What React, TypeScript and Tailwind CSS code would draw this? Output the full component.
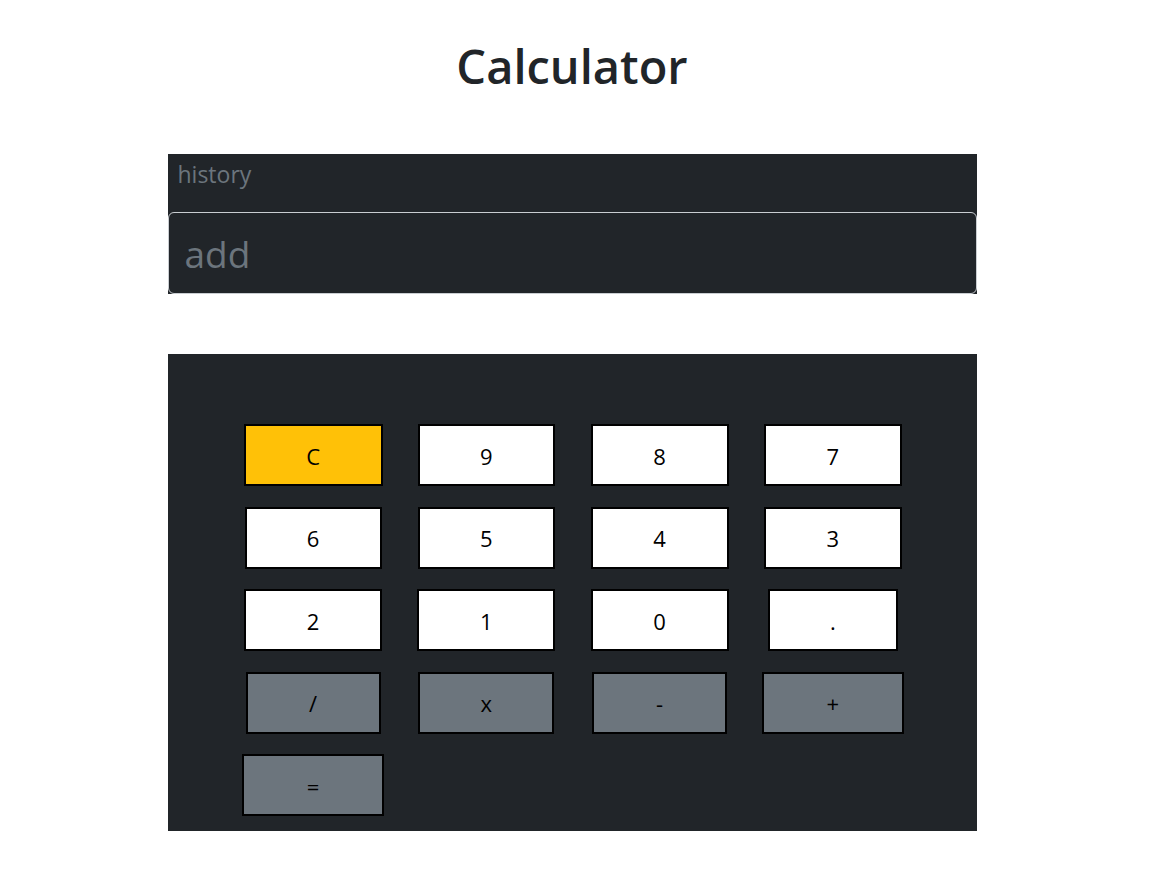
import { useState } from "react";

type Key = { label: string; w: number; kind: "num" | "op" | "clear" };

const keys: Key[] = [
  { label: "C", w: 139, kind: "clear" },
  { label: "9", w: 137, kind: "num" },
  { label: "8", w: 138, kind: "num" },
  { label: "7", w: 138, kind: "num" },
  { label: "6", w: 137, kind: "num" },
  { label: "5", w: 137, kind: "num" },
  { label: "4", w: 138, kind: "num" },
  { label: "3", w: 138, kind: "num" },
  { label: "2", w: 138, kind: "num" },
  { label: "1", w: 138, kind: "num" },
  { label: "0", w: 138, kind: "num" },
  { label: ".", w: 130, kind: "num" },
  { label: "/", w: 135, kind: "op" },
  { label: "x", w: 136, kind: "op" },
  { label: "-", w: 135, kind: "op" },
  { label: "+", w: 142, kind: "op" },
  { label: "=", w: 142, kind: "op" },
];

const kindClass = {
  num: "bg-white",
  op: "bg-[#6c757d]",
  clear: "bg-[#ffc107]",
};

export default function App() {
  const [value, setValue] = useState("");
  const [history, setHistory] = useState("history");

  const press = (k: string) => {
    if (k === "C") {
      setValue("");
      return;
    }
    if (k === "=") {
      try {
        const expr = value.replace(/x/g, "*");
        // eslint-disable-next-line no-new-func
        const res = String(Function(`return (${expr})`)());
        setHistory(value);
        setValue(res);
      } catch {
        setValue("");
      }
      return;
    }
    setValue(value + k);
  };

  return (
    <div className="w-[1144px] min-h-screen bg-white font-['Open_Sans',sans-serif] text-[#212529]">
      <div className="h-[154px] pt-[38px] text-center">
        <h1 className="text-[47px] leading-[56px] font-semibold">Calculator</h1>
      </div>

      <div className="mx-auto w-[809px]">
        <div className="bg-[#212529]">
          <div className="h-[58px] px-[10px] pt-[2px] text-[23px] leading-[36px] text-[#6c757d]">{history}</div>
          <input
            value={value}
            onChange={(e) => setValue(e.target.value)}
            placeholder="add"
            className="block h-[82px] w-full rounded-[6px] border border-[#c9cdd1] bg-[#212529] px-[16px] text-[37px] text-white placeholder:text-[#6c757d] outline-none"
          />
        </div>

        <div className="mt-[60px] bg-[#212529] pl-[59px] pr-[57px] pt-[70px] pb-[15px]">
          <div className="grid grid-cols-4 gap-y-[20.5px]">
            {keys.map((k) => (
              <button
                key={k.label}
                onClick={() => press(k.label)}
                style={{ width: k.w }}
                className={`h-[62px] justify-self-center border-2 border-black pt-[2px] text-[22px] text-black ${kindClass[k.kind]}`}
              >
                {k.label}
              </button>
            ))}
          </div>
        </div>
      </div>
    </div>
  );
}
